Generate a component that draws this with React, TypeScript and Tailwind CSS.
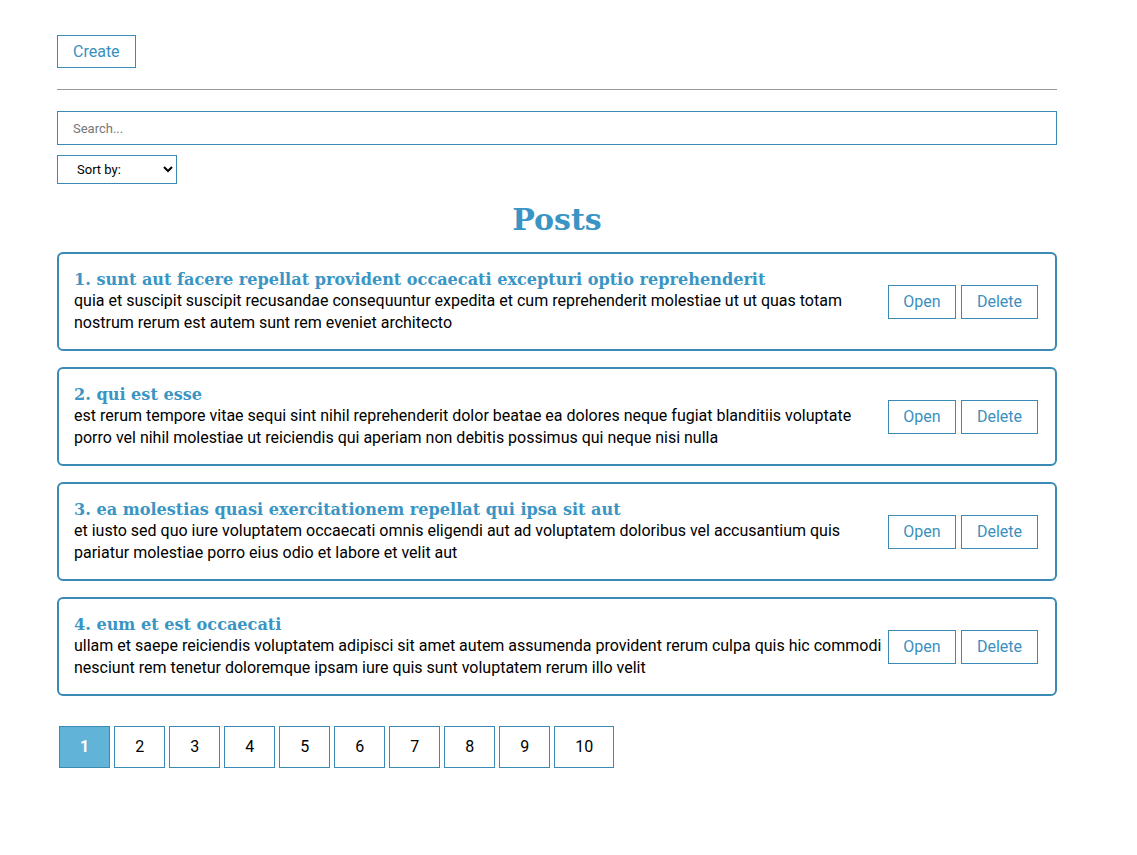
import React from "react";

const posts = [
  {
    id: 1,
    title: "sunt aut facere repellat provident occaecati excepturi optio reprehenderit",
    body: "quia et suscipit suscipit recusandae consequuntur expedita et cum reprehenderit molestiae ut ut quas totam nostrum rerum est autem sunt rem eveniet architecto",
  },
  {
    id: 2,
    title: "qui est esse",
    body: "est rerum tempore vitae sequi sint nihil reprehenderit dolor beatae ea dolores neque fugiat blanditiis voluptate porro vel nihil molestiae ut reiciendis qui aperiam non debitis possimus qui neque nisi nulla",
  },
  {
    id: 3,
    title: "ea molestias quasi exercitationem repellat qui ipsa sit aut",
    body: "et iusto sed quo iure voluptatem occaecati omnis eligendi aut ad voluptatem doloribus vel accusantium quis pariatur molestiae porro eius odio et labore et velit aut",
  },
  {
    id: 4,
    title: "eum et est occaecati",
    body: "ullam et saepe reiciendis voluptatem adipisci sit amet autem assumenda provident rerum culpa quis hic commodi nesciunt rem tenetur doloremque ipsam iure quis sunt voluptatem rerum illo velit",
  },
];

const slab = { fontFamily: '"DejaVu Serif", serif' };

export default function App() {
  return (
    <div className="min-h-[855px] bg-white text-black" style={{ fontFamily: "Roboto, sans-serif" }}>
      <div className="w-[1000px] ml-[57px] pt-[35px]">
        <button className="border border-[#3a8ab5] text-[#3a90c0] text-[16px] leading-[19px] px-[15px] py-[6px] bg-white">
          Create
        </button>
        <div className="h-px bg-[#999] mt-[21px]" />
        <input
          className="block w-full mt-[21px] h-[34px] border border-[#3a8ab5] px-[15px] text-[13px] placeholder:text-[#777] outline-none"
          placeholder="Search..."
        />
        <select className="block mt-[10px] w-[120px] h-[29px] border border-[#3a8ab5] text-[13px] pl-[15px] pr-[6px] bg-white">
          <option>Sort by:</option>
        </select>
        <h1 className="text-center text-[30px] leading-[36px] font-bold text-[#3a95c4] mt-[18px]" style={slab}>
          Posts
        </h1>
        <div className="flex flex-col gap-[16px] mt-[14px]">
          {posts.map((p) => (
            <div
              key={p.id}
              className="border-2 border-[#3a8ab5] rounded-[6px] px-[15px] py-[15px] flex items-center"
            >
              <div className="flex-1">
                <div className="text-[16.1px] leading-[21px] font-bold text-[#3a95c4]" style={slab}>
                  {p.id}. {p.title}
                </div>
                <div className="text-[16px] leading-[22px]">{p.body}</div>
              </div>
              <div className="flex gap-[5px] ml-[5px] mr-[2px] shrink-0">
                <button className="border border-[#3a8ab5] text-[#3a90c0] text-[16px] leading-[19px] h-[34px] w-[68px] bg-white">
                  Open
                </button>
                <button className="border border-[#3a8ab5] text-[#3a90c0] text-[16px] leading-[19px] h-[34px] w-[77px] bg-white">
                  Delete
                </button>
              </div>
            </div>
          ))}
        </div>
        <div className="flex gap-[4px] mt-[30px] ml-[2px]">
          {[1, 2, 3, 4, 5, 6, 7, 8, 9, 10].map((n) => (
            <div
              key={n}
              className={
                n === 1
                  ? "h-[42px] px-[20px] flex items-center justify-center border border-[#3a8ab5] bg-[#62b3d8] text-white font-bold text-[16px] min-w-[51px]"
                  : "h-[42px] px-[20px] flex items-center justify-center border border-[#3a8ab5] bg-white text-black text-[16px] min-w-[51px]"
              }
            >
              {n}
            </div>
          ))}
        </div>
      </div>
    </div>
  );
}
